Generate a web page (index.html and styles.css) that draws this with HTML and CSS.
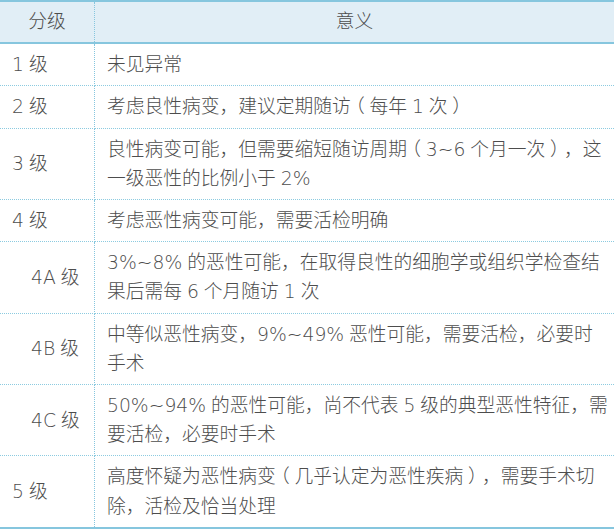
FILE: index.html
```html
<!DOCTYPE html>
<html lang="zh-CN">
<head>
<meta charset="utf-8">
<title>分级</title>
<link rel="stylesheet" href="styles.css">
</head>
<body>
<table class="grade-table">
  <thead>
    <tr>
      <th class="col-grade">分级</th>
      <th class="col-meaning">意义</th>
    </tr>
  </thead>
  <tbody>
    <tr><td class="grade">1 级</td><td class="meaning">未见异常</td></tr>
    <tr><td class="grade">2 级</td><td class="meaning">考虑良性病变，建议定期随访<span class="paren">（</span>每年 1 次<span class="paren">）</span></td></tr>
    <tr><td class="grade">3 级</td><td class="meaning">良性病变可能，但需要缩短随访周期<span class="paren">（</span>3~6 个月一次<span class="paren">）</span>，这<br>一级恶性的比例小于 2%</td></tr>
    <tr><td class="grade">4 级</td><td class="meaning">考虑恶性病变可能，需要活检明确</td></tr>
    <tr><td class="grade sub">4A 级</td><td class="meaning">3%~8% 的恶性可能，在取得良性的细胞学或组织学检查结<br>果后需每 6 个月随访 1 次</td></tr>
    <tr><td class="grade sub">4B 级</td><td class="meaning">中等似恶性病变，9%~49% 恶性可能，需要活检，必要时<br>手术</td></tr>
    <tr><td class="grade sub">4C 级</td><td class="meaning">50%~94% 的恶性可能，尚不代表 5 级的典型恶性特征，需<br>要活检，必要时手术</td></tr>
    <tr><td class="grade">5 级</td><td class="meaning">高度怀疑为恶性病变<span class="paren">（</span>几乎认定为恶性疾病<span class="paren">）</span>，需要手术切<br>除，活检及恰当处理</td></tr>
  </tbody>
</table>
</body>
</html>
```
FILE: styles.css
```css
html, body {
  margin: 0;
  padding: 0;
  background: #ffffff;
}

.grade-table {
  width: 614px;
  border-collapse: collapse;
  table-layout: fixed;
  font-family: "DejaVu Sans", "Noto Sans CJK SC", sans-serif;
  font-weight: 300;
  font-size: 18.75px;
  line-height: 29.2px;
  word-spacing: -1px;
  color: #4d4d4d;
  border-top: 2px solid #86c6de;
  border-bottom: 2px solid #86c6de;
}

.grade-table th {
  background: #e1eef6;
  font-weight: 300;
  padding: 5px 0 6px;
  text-align: center;
  border-bottom: 2px solid #86c6de;
}

.col-grade {
  width: 94px;
  border-right: 1px dotted #86c6de;
}

.grade-table td {
  padding: 6px 12px;
  vertical-align: middle;
  border-bottom: 1px dotted #8ccbe0;
}

.grade-table tbody tr:last-child td {
  border-bottom: none;
}

.grade {
  border-right: 1px dotted #86c6de;
  white-space: nowrap;
}

.grade.sub {
  padding-left: 31px;
}

.meaning {
  white-space: nowrap;
  padding-right: 0;
}

.paren {
  font-family: "Noto Sans CJK SC", sans-serif;
  font-feature-settings: "halt" 1;
  line-height: 0;
  padding: 0 0.25em;
}
```
